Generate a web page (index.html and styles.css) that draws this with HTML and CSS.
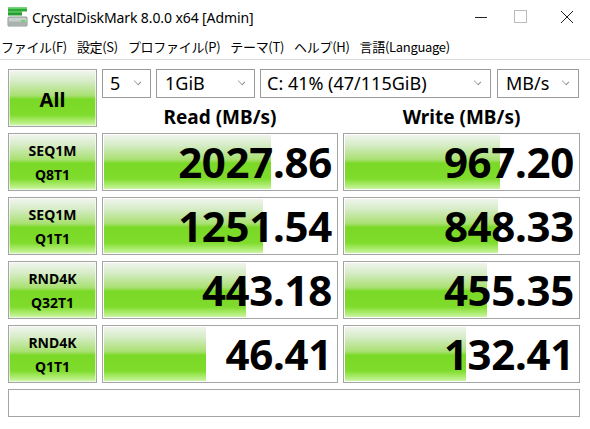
FILE: index.html
```html
<!DOCTYPE html>
<html lang="ja">
<head>
<meta charset="utf-8">
<title>CrystalDiskMark 8.0.0 x64 [Admin]</title>
<link rel="stylesheet" href="styles.css">
</head>
<body>
<div class="window">
  <header class="titlebar">
    <svg class="appicon" width="21" height="21" viewBox="0 0 21 21">
      <rect x="1" y="0.5" width="19" height="4" fill="#2fa83a"/>
      <rect x="1" y="0.5" width="19" height="1.5" fill="#5fd060"/>
      <rect x="1" y="4.5" width="14" height="4" fill="#2a9a34"/>
      <rect x="1" y="4.5" width="14" height="1.3" fill="#55c858"/>
      <rect x="0.5" y="9.5" width="20" height="10" rx="1.5" fill="#8e9894"/>
      <rect x="1.5" y="10.5" width="18" height="8" rx="1" fill="#c9d0cd"/>
      <rect x="1.5" y="14.5" width="18" height="4" rx="1" fill="#a9b2ae"/>
      <rect x="14" y="13" width="4" height="2" fill="#6fd66f"/>
    </svg>
    <span class="title">CrystalDiskMark 8.0.0 x64 [Admin]</span>
    <div class="controls">
      <span class="ctl"><svg width="14" height="14" viewBox="0 0 14 14"><line x1="1" y1="7.5" x2="13" y2="7.5" stroke="#222" stroke-width="1"/></svg></span>
      <span class="ctl"><svg width="14" height="14" viewBox="0 0 14 14"><rect x="0.5" y="0.5" width="12" height="12" fill="none" stroke="#bbb" stroke-width="1"/></svg></span>
      <span class="ctl"><svg width="14" height="14" viewBox="0 0 14 14"><path d="M1 1 L13 13 M13 1 L1 13" stroke="#222" stroke-width="1"/></svg></span>
    </div>
  </header>
  <nav class="menubar">
    <span class="mi">ファイル(F)</span>
    <span class="mi">設定(S)</span>
    <span class="mi">プロファイル(P)</span>
    <span class="mi">テーマ(T)</span>
    <span class="mi">ヘルプ(H)</span>
    <span class="mi">言語(Language)</span>
  </nav>
  <main class="grid">
    <div class="btn all">All</div>
    <div class="top">
      <div class="combos">
        <div class="combo c1"><span>5</span><i class="chev"></i></div>
        <div class="combo c2"><span>1GiB</span><i class="chev"></i></div>
        <div class="combo c3"><span>C: 41% (47/115GiB)</span><i class="chev"></i></div>
        <div class="combo c4"><span>MB/s</span><i class="chev"></i></div>
      </div>
      <div class="hdr">Read (MB/s)</div>
      <div class="hdr">Write (MB/s)</div>
    </div>

    <div class="btn lbl"><span>SEQ1M</span><span>Q8T1</span></div>
    <div class="val" style="--w:168px">2027.86</div>
    <div class="val" style="--w:156px">967.20</div>

    <div class="btn lbl"><span>SEQ1M</span><span>Q1T1</span></div>
    <div class="val" style="--w:160px">1251.54</div>
    <div class="val" style="--w:154px">848.33</div>

    <div class="btn lbl"><span>RND4K</span><span>Q32T1</span></div>
    <div class="val" style="--w:143px">443.18</div>
    <div class="val" style="--w:143px">455.35</div>

    <div class="btn lbl"><span>RND4K</span><span>Q1T1</span></div>
    <div class="val" style="--w:103px">46.41</div>
    <div class="val" style="--w:122px">132.41</div>

    <div class="status"></div>
  </main>
</div>
</body>
</html>
```
FILE: styles.css
```css
* { box-sizing: border-box; }
html, body { margin: 0; padding: 0; background: #fff; }
body { width: 590px; height: 429px; overflow: hidden; font-family: "Noto Sans", "Noto Sans CJK JP", sans-serif; color: #000; }

.titlebar { height: 34px; display: flex; align-items: center; padding-left: 7px; }
.appicon { display: block; }
.title { margin-left: 4px; font-size: 14px; color: #000; letter-spacing: -0.1px; }
.controls { margin-left: auto; display: flex; height: 34px; }
.ctl { width: 46px; display: flex; align-items: center; justify-content: center; padding-bottom: 1px; }
.controls .ctl:first-child { width: 70px; justify-content: flex-end; padding-right: 10px; }

.menubar { height: 26px; display: flex; align-items: center; padding-left: 1px; border-bottom: 1px solid #dcdcdc; font-family: "Noto Sans CJK JP", "Noto Sans", sans-serif; font-size: 13px; }
.mi { margin-right: 10px; letter-spacing: -0.3px; }

.grid {
  display: grid;
  grid-template-columns: 89px 236px 237px;
  grid-template-rows: 58px 58px 58px 58px 58px 28px;
  column-gap: 5px;
  row-gap: 6px;
  padding: 9px 10px 0 8px;
}

.btn {
  border: 1px solid #a4a4a4;
  background: linear-gradient(to bottom, #f2f5f0 0%, #d6ecc6 20%, #a8e070 46%, #7ad826 52%, #80dc2c 80%, #b4ee7c 93%, #d2f6b2 100%);
  box-shadow: inset 0 0 0 1px rgba(255,255,255,0.6);
  display: flex; flex-direction: column; align-items: center; justify-content: center;
  font-weight: 700;
}
.all { font-size: 20px; padding-top: 2px; }
.lbl { font-size: 14px; line-height: 24px; padding-top: 2px; }

.top { grid-column: 2 / 4; display: grid; grid-template-columns: 236px 237px; grid-template-rows: 29px 29px; column-gap: 5px; }
.combos { grid-column: 1 / 3; display: flex; gap: 5px; }
.combo { height: 29px; border: 1px solid #9a9a9a; display: flex; align-items: center; padding: 0 0 1px 7px; font-size: 18px; }
.combo span { flex: 1; }
.c1 { width: 49px; }
.c2 { width: 99px; padding-left: 8px; }
.c3 { width: 231px; padding-left: 6px; }
.c4 { width: 82px; margin-left: 1px; padding-left: 8px; }
.chev { width: 7px; height: 7px; border-right: 1px solid #888; border-bottom: 1px solid #888; transform: rotate(45deg) scale(0.9, 0.6); margin: 0 9px 4px 0; }
.hdr { font-weight: 700; font-size: 19px; text-align: center; line-height: 29px; padding-top: 5px; }

.val {
  border: 1px solid #a4a4a4;
  background-color: #fff;
  background-image: linear-gradient(to bottom, #f2f5f0 0%, #d6ecc6 20%, #a8e070 46%, #7ad826 52%, #80dc2c 80%, #b4ee7c 93%, #d2f6b2 100%);
  background-repeat: no-repeat;
  background-size: var(--w) 100%;
  box-shadow: inset 0 0 0 1px #fff;
  text-align: right;
  font-weight: 700;
  font-size: 42px;
  line-height: 56px;
  padding-right: 5px;
  letter-spacing: -0.3px;
}
.status { grid-column: 1 / 4; border: 1px solid #a4a4a4; background: #fff; }
```
